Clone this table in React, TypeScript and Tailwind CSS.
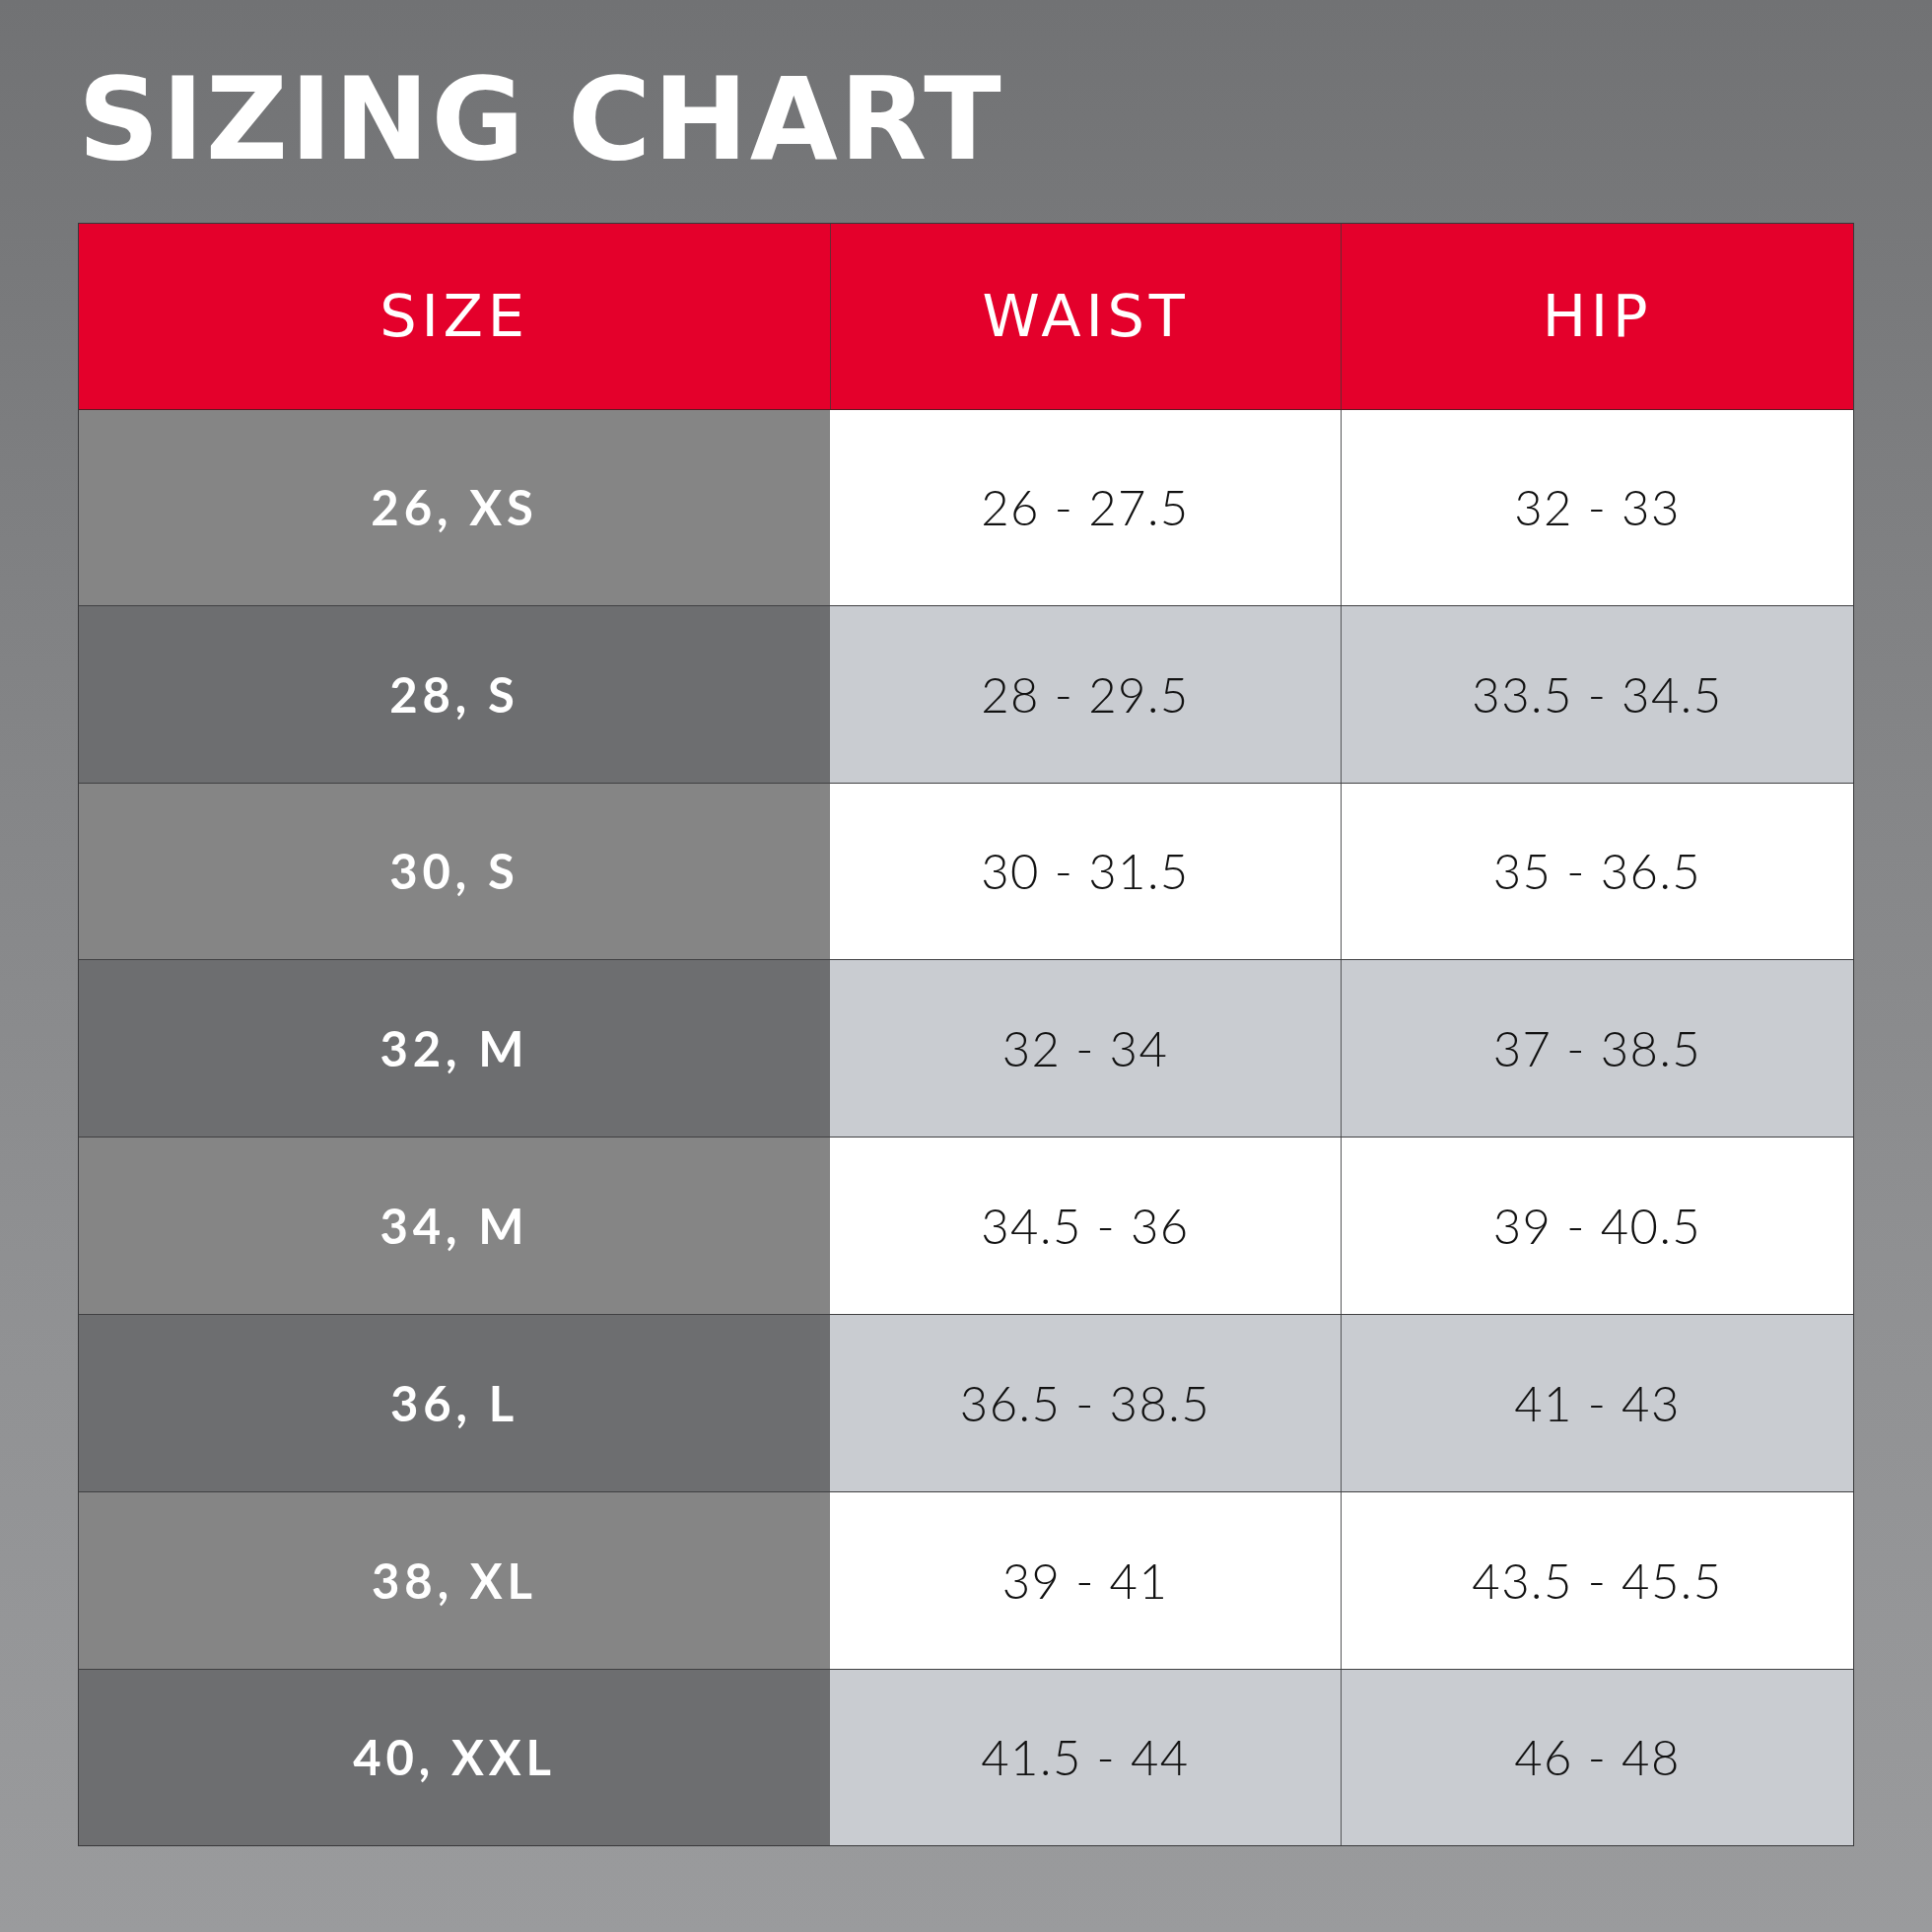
const rows = [
  { size: "26, XS", waist: "26 - 27.5", hip: "32 - 33", h: "h-[198px]" },
  { size: "28, S", waist: "28 - 29.5", hip: "33.5 - 34.5", h: "h-[180px]" },
  { size: "30, S", waist: "30 - 31.5", hip: "35 - 36.5", h: "h-[179px]" },
  { size: "32, M", waist: "32 - 34", hip: "37 - 38.5", h: "h-[180px]" },
  { size: "34, M", waist: "34.5 - 36", hip: "39 - 40.5", h: "h-[180px]" },
  { size: "36, L", waist: "36.5 - 38.5", hip: "41 - 43", h: "h-[180px]" },
  { size: "38, XL", waist: "39 - 41", hip: "43.5 - 45.5", h: "h-[180px]" },
  { size: "40, XXL", waist: "41.5 - 44", hip: "46 - 48", h: "h-[179px]" },
];

const App = () => {
  return (
    <div className="w-[1960px] h-[1960px] bg-[linear-gradient(to_bottom,#717274_0%,#808183_30%,#8f9092_65%,#9a9b9d_100%)] pl-[79px] pt-[64px]">
      <h1 className="font-['DejaVu_Sans',sans-serif] font-bold text-[115px] leading-none tracking-[0.018em] text-white">
        SIZING CHART
      </h1>

      <div className="mt-[47px] w-[1802px] border border-[#38383a]">
        {/* header */}
        <div className="grid grid-cols-[762px_518px_1fr] h-[189px] bg-[#e4002b] border-b border-[#5a1a22] font-['DejaVu_Sans',sans-serif] text-[59px] tracking-[0.08em] text-white">
          <div className="flex items-center justify-center">SIZE</div>
          <div className="flex items-center justify-center border-l border-[#6a2a32]">WAIST</div>
          <div className="flex items-center justify-center border-l border-[#6a2a32]">HIP</div>
        </div>

        {rows.map((r, i) => {
          const dark = i % 2 === 1;
          return (
            <div
              key={r.size}
              className={`grid grid-cols-[762px_518px_1fr] ${r.h} ${i > 0 ? "border-t border-[#404042]" : ""}`}
            >
              <div
                className={`flex items-center justify-center font-['Lato',sans-serif] font-bold text-[49px] tracking-[0.1em] text-white ${
                  dark ? "bg-[#6d6e70]" : "bg-[#858585]"
                }`}
              >
                {r.size}
              </div>
              <div
                className={`flex items-center justify-center font-['Lato',sans-serif] font-light text-[49px] tracking-[0.03em] text-[#111] ${
                  dark ? "bg-[#c9ccd1]" : "bg-white"
                }`}
              >
                {r.waist}
              </div>
              <div
                className={`flex items-center justify-center border-l border-[#555658] font-['Lato',sans-serif] font-light text-[49px] tracking-[0.03em] text-[#111] ${
                  dark ? "bg-[#c9ccd1]" : "bg-white"
                }`}
              >
                {r.hip}
              </div>
            </div>
          );
        })}
      </div>
    </div>
  );
};

export default App;
